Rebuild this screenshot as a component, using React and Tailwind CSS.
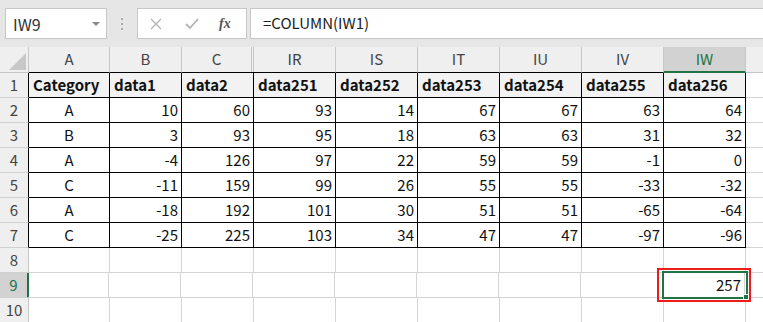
import React from 'react';

const font = { fontFamily: '"Noto Sans CJK JP", "Noto Sans", sans-serif' };

const cols = [
  { key: 'A', w: 'w-[81px]' },
  { key: 'B', w: 'w-[72px]' },
  { key: 'C', w: 'w-[72px]' },
  { key: 'IR', w: 'w-[82px]' },
  { key: 'IS', w: 'w-[82px]' },
  { key: 'IT', w: 'w-[82px]' },
  { key: 'IU', w: 'w-[82px]' },
  { key: 'IV', w: 'w-[82px]' },
  { key: 'IW', w: 'w-[82px]' },
];

const header = ['Category', 'data1', 'data2', 'data251', 'data252', 'data253', 'data254', 'data255', 'data256'];

const rows = [
  ['A', 10, 60, 93, 14, 67, 67, 63, 64],
  ['B', 3, 93, 95, 18, 63, 63, 31, 32],
  ['A', -4, 126, 97, 22, 59, 59, -1, 0],
  ['C', -11, 159, 99, 26, 55, 55, -33, -32],
  ['A', -18, 192, 101, 30, 51, 51, -65, -64],
  ['C', -25, 225, 103, 34, 47, 47, -97, -96],
];

function RowHead({ n, dark, selected }) {
  return (
    <div
      className={`w-[29px] h-full flex items-center justify-center text-[15px] border-b border-b-[#d0d0d0] ${
        selected
          ? 'bg-[#d2d2d2] text-[#217346] border-r-2 border-r-[#217346]'
          : `bg-[#efefef] text-[#444] border-r ${dark ? 'border-r-black' : 'border-r-[#c6c6c6]'}`
      }`}
    >
      {n}
    </div>
  );
}

export default function App() {
  return (
    <div className="w-[763px] h-[322px] overflow-hidden bg-white text-[#111]" style={font}>
      {/* toolbar */}
      <div className="h-[47px] bg-[#e6e6e6] flex items-start pt-[8px] pl-[5px]">
        <div className="w-[102px] h-[31px] bg-white border border-[#c6c6c6] flex items-center justify-between pl-[7px] pr-[6px]">
          <span className="text-[16px] text-[#333]">IW9</span>
          <span className="w-0 h-0 border-l-[4px] border-r-[4px] border-t-[4px] border-l-transparent border-r-transparent border-t-[#888]" />
        </div>
        <div className="w-[30px] h-[31px] flex flex-col items-center justify-center gap-[3px]">
          <span className="w-[2px] h-[2px] bg-[#aaa]" />
          <span className="w-[2px] h-[2px] bg-[#aaa]" />
          <span className="w-[2px] h-[2px] bg-[#aaa]" />
        </div>
        <div className="w-[110px] h-[31px] bg-white border border-[#c6c6c6] flex items-center">
          <svg className="ml-[12px]" width="12" height="12" viewBox="0 0 12 12">
            <path d="M1 1 L11 11 M11 1 L1 11" stroke="#b4b4b4" strokeWidth="1.4" fill="none" />
          </svg>
          <svg className="ml-[23px]" width="14" height="12" viewBox="0 0 14 12">
            <path d="M1 6 L5 10 L13 1" stroke="#b4b4b4" strokeWidth="1.8" fill="none" />
          </svg>
          <span className="ml-[20px] text-[14px] italic font-bold text-[#555]" style={{ fontFamily: '"Liberation Serif", serif' }}>
            fx
          </span>
        </div>
        <div className="ml-[3px] flex-1 h-[31px] bg-white border border-r-0 border-[#c6c6c6] flex items-center pl-[12px]">
          <span className="text-[15px] text-[#222]">=COLUMN(IW1)</span>
        </div>
      </div>

      {/* grid */}
      <div className="relative">
        {/* column header row */}
        <div className="flex h-[26px] bg-[#efefef]">
          <div className="w-[29px] h-full border-r border-b border-[#c6c6c6] relative overflow-hidden">
            <svg className="absolute right-[2px] bottom-[2px]" width="17" height="17" viewBox="0 0 17 17">
              <path d="M17 0 L17 17 L0 17 Z" fill="#c8c8c8" />
            </svg>
          </div>
          {cols.map((c) =>
            c.key === 'C' ? (
              <div key={c.key} className="flex h-full border-b border-b-black">
                <div className="w-[70px] h-full border-r border-[#c6c6c6] flex items-center justify-center text-[15px] text-[#444]">C</div>
                <div className="w-[2px] h-full border-r border-[#c6c6c6]" />
              </div>
            ) : c.key === 'IW' ? (
              <div key={c.key} className={`${c.w} h-full bg-[#d2d2d2] border-r border-[#c6c6c6] border-b-2 border-b-[#217346] flex items-center justify-center text-[15px] text-[#217346]`}>
                {c.key}
              </div>
            ) : (
              <div key={c.key} className={`${c.w} h-full border-r border-[#c6c6c6] border-b border-b-black flex items-center justify-center text-[15px] text-[#444]`}>
                {c.key}
              </div>
            )
          )}
          <div className="flex-1 h-full border-b border-[#c6c6c6]" />
        </div>

        {/* row 1 */}
        <div className="flex h-[25px]">
          <RowHead n={1} dark />
          {header.map((h, i) => (
            <div key={i} className={`${cols[i].w} h-full bg-[#f2f2f2] border-r border-b border-black flex items-center pl-[4px] text-[15px] font-bold`}>
              {h}
            </div>
          ))}
          <div className="flex-1 h-full border-b border-[#d4d4d4]" />
        </div>

        {rows.map((r, ri) => (
          <div key={ri} className="flex h-[25px]">
            <RowHead n={ri + 2} dark />
            {r.map((v, i) => (
              <div
                key={i}
                className={`${cols[i].w} h-full border-r border-b border-black flex items-center text-[15px] ${
                  i === 0 ? 'justify-center' : 'justify-end pr-[3px]'
                }`}
              >
                {v}
              </div>
            ))}
            <div className="flex-1 h-full border-b border-[#d4d4d4]" />
          </div>
        ))}

        {[8, 9, 10].map((n) => (
          <div key={n} className="flex h-[25px]">
            <RowHead n={n} selected={n === 9} />
            {cols.map((c, i) => (
              <div
                key={c.key}
                className={`${c.w} h-full border-r border-b border-[#d4d4d4] flex items-center justify-end pr-[3px] text-[15px] ${n === 9 && i === 0 ? '-ml-px' : ''}`}
              >
                {n === 9 && c.key === 'IW' ? '257' : ''}
              </div>
            ))}
            <div className="flex-1 h-full border-b border-[#d4d4d4]" />
          </div>
        ))}

        {/* active cell */}
        <div className="absolute left-[662px] top-[224px] w-[86px] h-[28px] border-2 border-[#217346] pointer-events-none">
          <span className="absolute -right-[3px] -bottom-[3px] w-[6px] h-[6px] bg-[#217346] border border-white" />
        </div>
        {/* red highlight */}
        <div className="absolute left-[657px] top-[221px] w-[94px] h-[34px] border-2 border-[#f01c1c] pointer-events-none" />
      </div>
    </div>
  );
}
